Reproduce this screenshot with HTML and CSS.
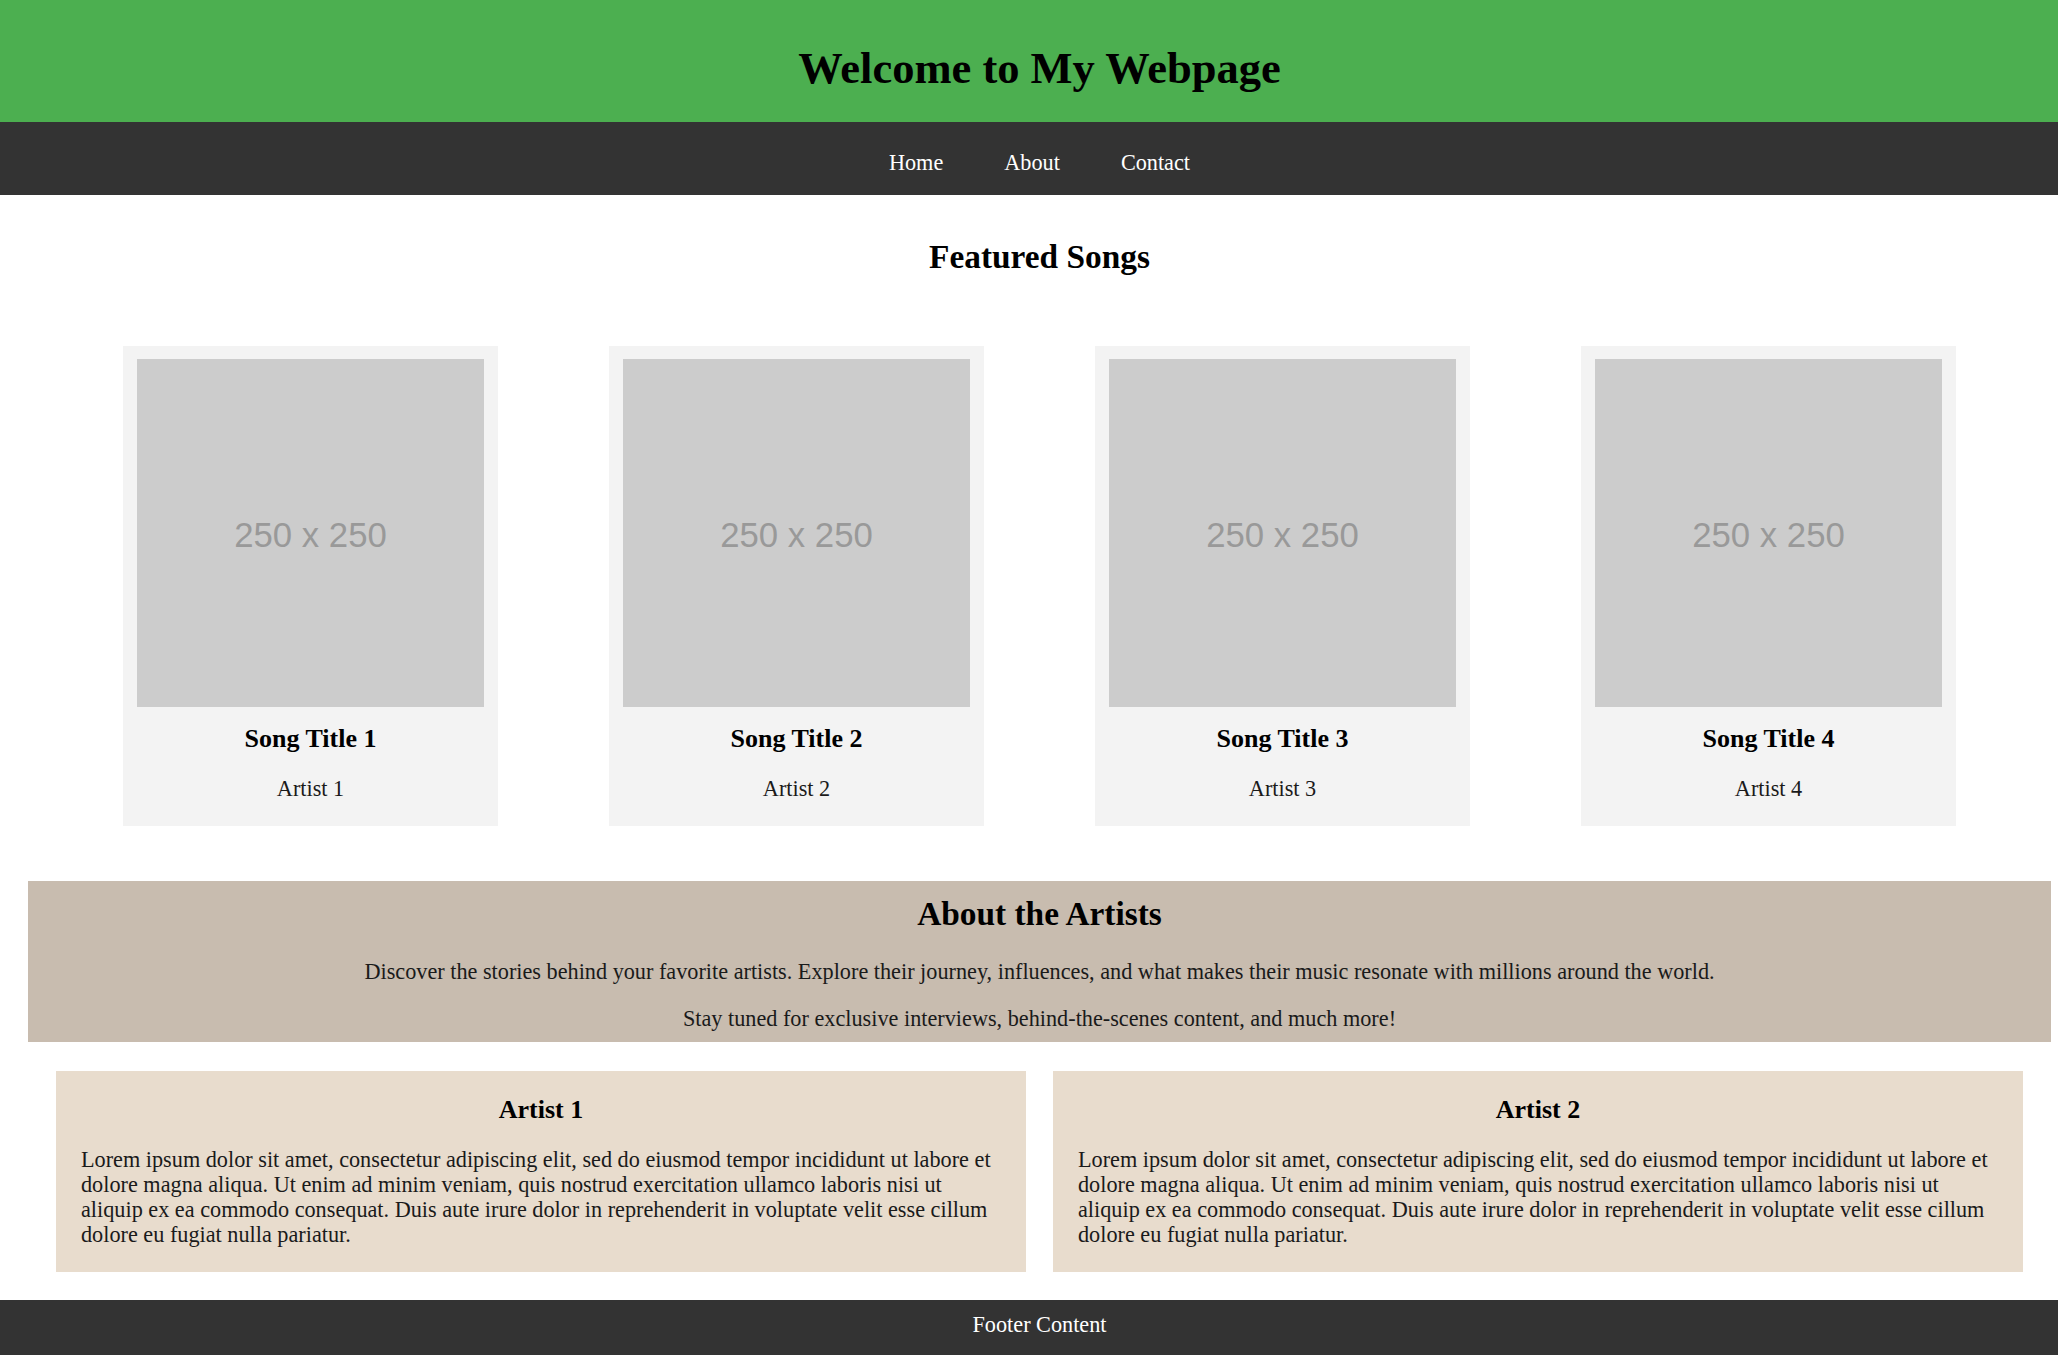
FILE: index.html
```html
<!DOCTYPE html>
<html lang="en">
<head>
<meta charset="utf-8">
<title>My Webpage</title>
<link rel="stylesheet" href="styles.css">
</head>
<body>
<header class="site-header">
  <h1 class="site-title">Welcome to My Webpage</h1>
</header>
<nav class="site-nav">
  <a href="#" class="nav-link">Home</a>
  <a href="#" class="nav-link">About</a>
  <a href="#" class="nav-link">Contact</a>
</nav>
<main class="content">
  <h2 class="section-title">Featured Songs</h2>
  <div class="songs">
    <div class="song-card">
      <div class="cover">250 x 250</div>
      <h3 class="song-title">Song Title 1</h3>
      <p class="song-artist">Artist 1</p>
    </div>
    <div class="song-card">
      <div class="cover">250 x 250</div>
      <h3 class="song-title">Song Title 2</h3>
      <p class="song-artist">Artist 2</p>
    </div>
    <div class="song-card">
      <div class="cover">250 x 250</div>
      <h3 class="song-title">Song Title 3</h3>
      <p class="song-artist">Artist 3</p>
    </div>
    <div class="song-card">
      <div class="cover">250 x 250</div>
      <h3 class="song-title">Song Title 4</h3>
      <p class="song-artist">Artist 4</p>
    </div>
  </div>
  <section class="about">
    <h2 class="about-title">About the Artists</h2>
    <p class="about-text">Discover the stories behind your favorite artists. Explore their journey, influences, and what makes their music resonate with millions around the world.</p>
    <p class="about-text second">Stay tuned for exclusive interviews, behind-the-scenes content, and much more!</p>
  </section>
  <div class="artists">
    <div class="artist-card">
      <h3 class="artist-name">Artist 1</h3>
      <p class="artist-bio">Lorem ipsum dolor sit amet, consectetur adipiscing elit, sed do eiusmod tempor incididunt ut labore et dolore magna aliqua. Ut enim ad minim veniam, quis nostrud exercitation ullamco laboris nisi ut aliquip ex ea commodo consequat. Duis aute irure dolor in reprehenderit in voluptate velit esse cillum dolore eu fugiat nulla pariatur.</p>
    </div>
    <div class="artist-card">
      <h3 class="artist-name">Artist 2</h3>
      <p class="artist-bio">Lorem ipsum dolor sit amet, consectetur adipiscing elit, sed do eiusmod tempor incididunt ut labore et dolore magna aliqua. Ut enim ad minim veniam, quis nostrud exercitation ullamco laboris nisi ut aliquip ex ea commodo consequat. Duis aute irure dolor in reprehenderit in voluptate velit esse cillum dolore eu fugiat nulla pariatur.</p>
    </div>
  </div>
</main>
<footer class="site-footer">Footer Content</footer>
</body>
</html>
```

FILE: styles.css
```css
html, body {
  margin: 0;
  padding: 0;
}

body {
  font-family: "Liberation Serif", "Times New Roman", serif;
  font-size: 22.24px;
  line-height: 25px;
  color: #111;
  background: #fff;
}

.site-header {
  background: #4caf50;
  height: 122px;
  box-sizing: border-box;
  padding: 43px 0 28px 21px;
  text-align: center;
}

.site-title {
  margin: 0;
  font-size: 44.5px;
  line-height: 51px;
  font-weight: bold;
  color: #000;
}

.site-nav {
  background: #333;
  height: 73px;
  box-sizing: border-box;
  padding: 28px 0 20px 21px;
  display: flex;
  justify-content: center;
  gap: 61px;
}

.nav-link {
  color: #fff;
  text-decoration: none;
  line-height: 25px;
}

.content {
  padding-left: 21px;
}

.section-title {
  margin: 43px 0 0;
  font-size: 33.36px;
  line-height: 38px;
  text-align: center;
  color: #000;
}

.songs {
  margin-top: 70px;
  display: flex;
  justify-content: center;
  gap: 111px;
}

.song-card {
  width: 375px;
  box-sizing: border-box;
  padding: 13px 14px 25px;
  background: #f3f3f3;
  text-align: center;
}

.cover {
  width: 347px;
  height: 348px;
  background: #cccccc;
  color: #999;
  font-family: "Liberation Sans", Arial, sans-serif;
  font-size: 34.75px;
  display: flex;
  align-items: center;
  justify-content: center;
  padding-top: 5px;
  box-sizing: border-box;
}

.song-title {
  margin: 17px 0 0;
  font-size: 26px;
  line-height: 30px;
  color: #000;
}

.song-artist {
  margin: 22px 0 0;
  color: #1a1a1a;
}

.about {
  margin: 55px 7px 0;
  padding: 14px 0 11px;
  background: #c8bcaf;
  text-align: center;
}

.about-title {
  margin: 0;
  font-size: 33.36px;
  line-height: 38px;
  color: #000;
}

.about-text {
  margin: 26px 0 0;
  color: #1a1a1a;
}

.about-text.second {
  margin-top: 22px;
}

.artists {
  margin: 29px 35px 0;
  display: flex;
  gap: 27px;
}

.artist-card {
  flex: 1;
  background: #e8dccd;
  padding: 24px 25px 25px;
}

.artist-name {
  margin: 0;
  font-size: 26px;
  line-height: 30px;
  text-align: center;
  color: #000;
}

.artist-bio {
  margin: 22px 0 0;
  color: #1a1a1a;
}

.site-footer {
  margin-top: 28px;
  background: #333;
  color: #fff;
  text-align: center;
  padding: 12px 0 18px 21px;
  height: 55px;
  box-sizing: border-box;
}
```
